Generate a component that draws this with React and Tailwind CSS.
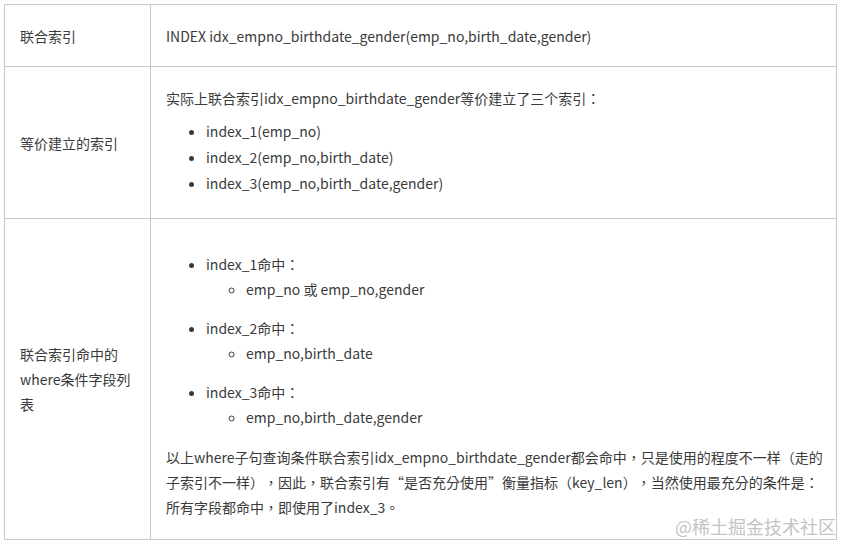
import React from 'react';

const font = { fontFamily: '"Noto Sans CJK TC", "Noto Sans CJK SC", sans-serif' };

const cell = 'border border-[#c8c8c8] px-[15px] align-middle';

const App = () => {
  return (
    <div
      className="relative w-[842px] h-[544px] bg-white text-[14px] text-[#3a3a3a] [text-spacing-trim:space-all]"
      style={font}
    >
      <div className="pt-[4px] pl-[4px]">
        <table className="border-collapse w-[833px] table-fixed">
          <colgroup>
            <col className="w-[146px]" />
            <col />
          </colgroup>
          <tbody>
            <tr className="h-[62px]">
              <td className={`${cell} leading-[26px]`}>联合索引</td>
              <td className={`${cell} leading-[26px]`}>
                INDEX idx_empno_birthdate_gender(emp_no,birth_date,gender)
              </td>
            </tr>
            <tr className="h-[152px]">
              <td className={`${cell} leading-[26px]`}>等价建立的索引</td>
              <td className={`${cell} leading-[26px] pb-[4px]`}>
                <p className="mb-[7px]">实际上联合索引idx_empno_birthdate_gender等价建立了三个索引：</p>
                <ul className="list-disc pl-[40px]">
                  <li>index_1(emp_no)</li>
                  <li>index_2(emp_no,birth_date)</li>
                  <li>index_3(emp_no,birth_date,gender)</li>
                </ul>
              </td>
            </tr>
            <tr className="h-[321px]">
              <td className={`${cell} leading-[25px]`}>
                联合索引命中的where条件字段列表
              </td>
              <td className={`${cell} leading-[25px] pt-[15px] pb-[1px] pr-[8px]`}>
                <ul className="list-disc pl-[40px] flex flex-col gap-[14px]">
                  <li>
                    index_1命中：
                    <ul className="list-[circle] pl-[40px]">
                      <li>emp_no 或 emp_no,gender</li>
                    </ul>
                  </li>
                  <li>
                    index_2命中：
                    <ul className="list-[circle] pl-[40px]">
                      <li>emp_no,birth_date</li>
                    </ul>
                  </li>
                  <li>
                    index_3命中：
                    <ul className="list-[circle] pl-[40px]">
                      <li>emp_no,birth_date,gender</li>
                    </ul>
                  </li>
                </ul>
                <p className="mt-[15px]">
                  以上where子句查询条件联合索引idx_empno_birthdate_gender都会命中，只是使用的程度不一样（走的子索引不一样），因此，联合索引有“是否充分使用”衡量指标（key_len），当然使用最充分的条件是：所有字段都命中，即使用了index_3。
                </p>
              </td>
            </tr>
          </tbody>
        </table>
      </div>
      <div className="absolute right-[6px] top-[516px] text-[18px] leading-[20px] text-[#c4c4c4]">@稀土掘金技术社区</div>
    </div>
  );
};

export default App;
